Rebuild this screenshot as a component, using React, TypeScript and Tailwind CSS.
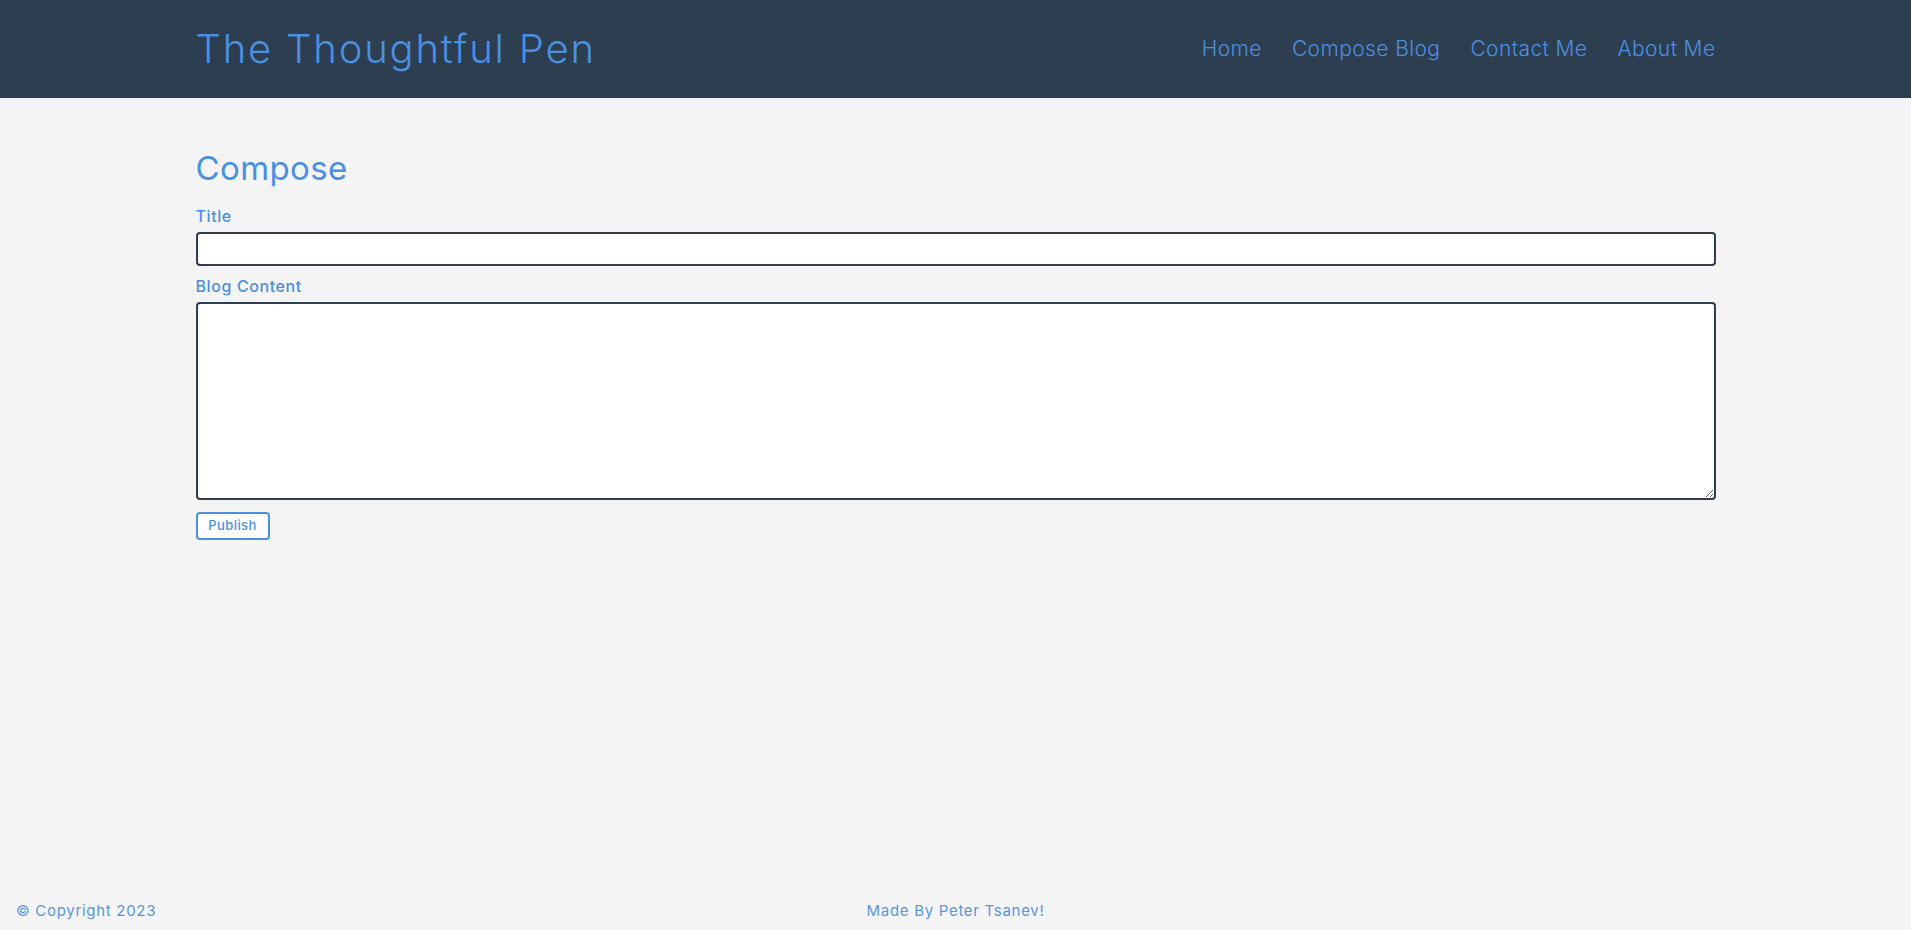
import React from 'react'

const navLinks = ['Home', 'Compose Blog', 'Contact Me', 'About Me']

const App = () => {
  return (
    <div className="min-h-screen flex flex-col bg-[#f4f4f4] text-[#4a90e2]" style={{ fontFamily: 'Inter, "Open Sans", sans-serif' }}>
      {/* Header */}
      <header className="h-[98px] bg-[#2d3e50]">
        <div className="w-[1520px] mx-auto h-full flex items-center justify-between">
          <a href="#" className="text-[40px] font-light leading-none tracking-[1.8px]">
            The Thoughtful Pen
          </a>
          <nav className="flex items-center gap-[30px] text-[21px] font-light tracking-[0.4px]">
            {navLinks.map((link) => (
              <a key={link} href="#">
                {link}
              </a>
            ))}
          </nav>
        </div>
      </header>

      {/* Compose form */}
      <main className="flex-1">
        <div className="w-[1520px] mx-auto pt-[50px]">
          <h1 className="text-[33px] leading-[40px] font-normal tracking-[0.4px]">Compose</h1>
          <form className="mt-[18px] flex flex-col">
            <label className="text-[16px] leading-[20px] font-medium tracking-[0.6px]">Title</label>
            <input
              type="text"
              className="mt-[6px] h-[34px] w-full bg-white border-2 border-[#2d3e50] rounded-[4px] px-2 outline-none"
            />
            <label className="mt-[10px] text-[16px] leading-[20px] font-medium tracking-[0.6px]">Blog Content</label>
            <textarea className="mt-[6px] h-[198px] w-full bg-white border-2 border-[#2d3e50] rounded-[4px] p-2 outline-none" />
            <div className="mt-[12px]">
              <button
                type="button"
                className="w-[74px] h-[28px] border-2 border-[#4a90e2] rounded-[4px] bg-white text-[13px] font-medium tracking-[0.4px] text-[#4a90e2]"
              >
                Publish
              </button>
            </div>
          </form>
        </div>
      </main>

      {/* Footer */}
      <footer className="relative h-[38px] flex items-center justify-center text-[15px] tracking-[0.7px] text-[#5a96e0]">
        <span className="absolute left-[16px]">© Copyright 2023</span>
        <span>Made By Peter Tsanev!</span>
      </footer>
    </div>
  )
}

export default App
